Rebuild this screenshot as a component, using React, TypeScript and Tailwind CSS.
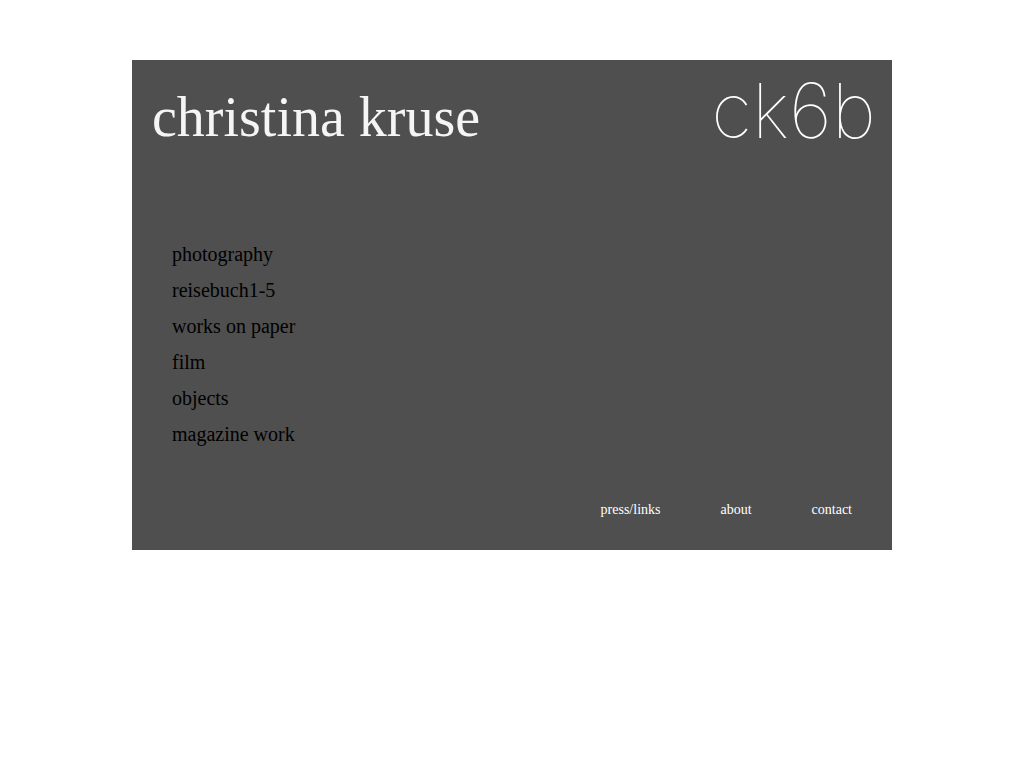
const sections = ['photography', 'reisebuch1-5', 'works on paper', 'film', 'objects', 'magazine work']
const footerLinks = ['press/links', 'about', 'contact']

const App = () => {
  return (
    <div className="min-h-screen bg-white px-4 pt-[60px] pb-8 font-['Liberation_Serif',serif]">
      <div className="max-w-[760px] mx-auto bg-[#4f4f4f]">
        <header className="flex items-start justify-between pl-5 pr-4 pt-5">
          <h1 className="pt-2 text-[56px] leading-[58px] text-[#f5f5f5]">
            <a href="#">christina kruse</a>
          </h1>
          <a
            href="#"
            className="text-[76px] leading-[60px] font-thin text-white font-['Inter',sans-serif]"
          >
            ck6b
          </a>
        </header>

        <nav className="px-10 pt-[90px]">
          <ul>
            {sections.map((item) => (
              <li key={item} className="text-xl leading-9 text-black">
                <a href="#">{item}</a>
              </li>
            ))}
          </ul>
        </nav>

        <footer className="flex justify-end gap-[60px] px-10 pt-12 pb-[30px] text-sm text-white">
          {footerLinks.map((item) => (
            <a key={item} href="#">{item}</a>
          ))}
        </footer>
      </div>
    </div>
  )
}

export default App
